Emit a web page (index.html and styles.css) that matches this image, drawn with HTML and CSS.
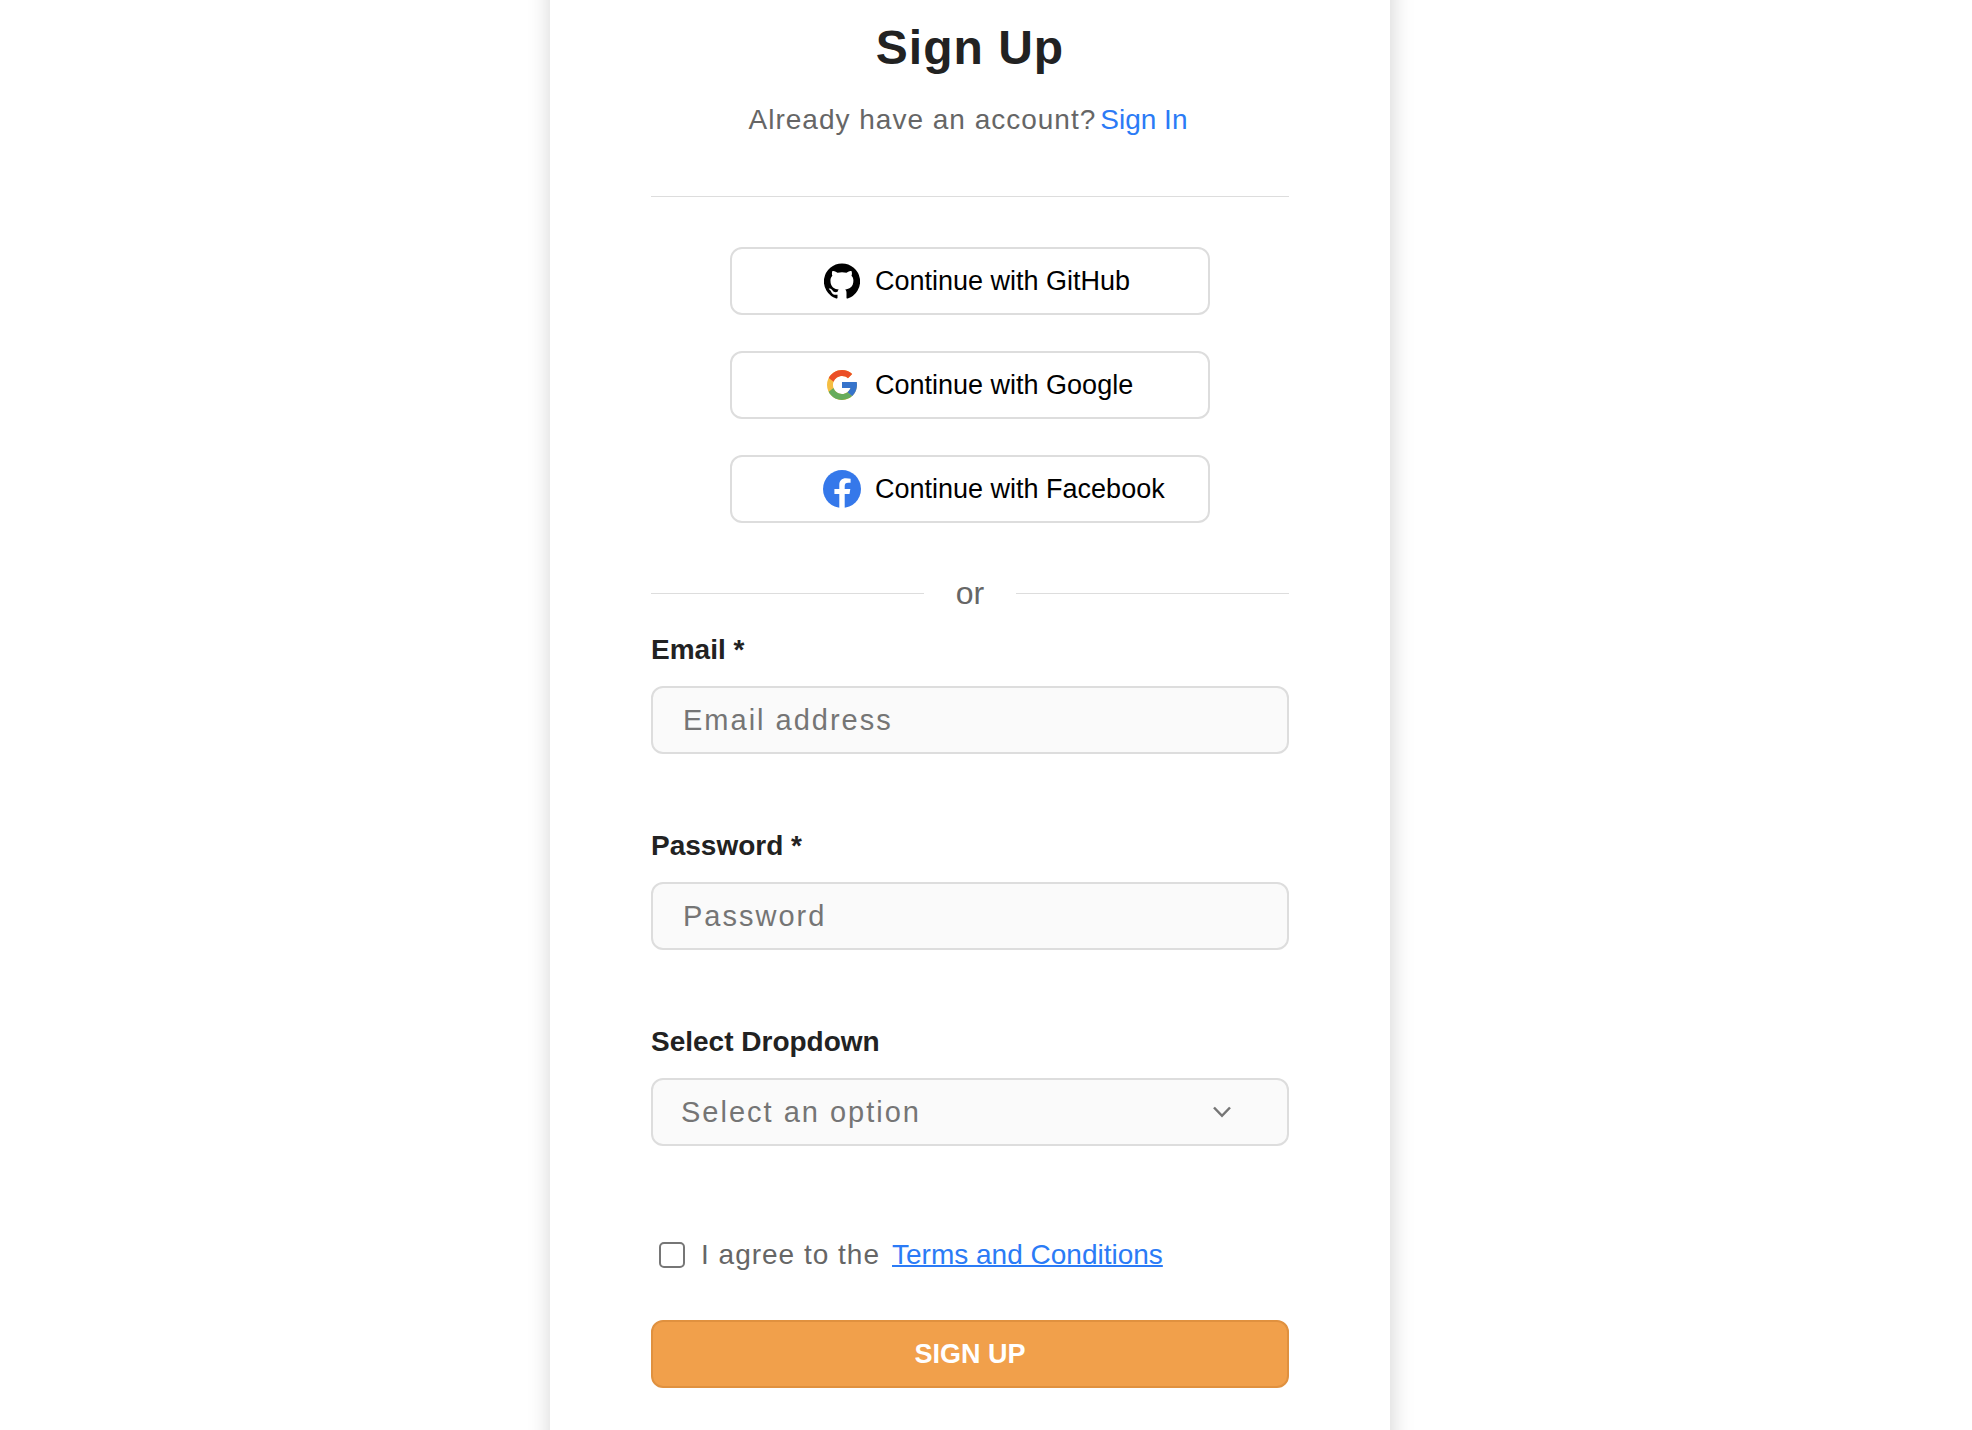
FILE: index.html
```html
<!DOCTYPE html>
<html lang="en">
<head>
<meta charset="utf-8">
<meta name="viewport" content="width=device-width, initial-scale=1">
<title>Sign Up</title>
<link rel="stylesheet" href="styles.css">
</head>
<body>
<main class="page">
  <section class="card">
    <header class="intro">
      <h1 class="title">Sign Up</h1>
      <p class="subtitle">Already have an account?<a class="signin" href="#">Sign In</a></p>
    </header>

    <div class="socials">
      <button class="social" type="button">
        <span class="social-icon"><svg width="36" height="36" viewBox="0 0 24 24" aria-hidden="true"><path d="M12 .3a12 12 0 0 0-3.8 23.4c.6.1.8-.3.8-.6v-2c-3.3.7-4-1.6-4-1.6-.6-1.4-1.4-1.8-1.4-1.8-1-.7.1-.7.1-.7 1.2 0 1.9 1.2 1.9 1.2 1 1.8 2.8 1.3 3.5 1 0-.8.4-1.3.7-1.6-2.7-.3-5.5-1.3-5.5-6 0-1.2.5-2.3 1.3-3.1-.2-.4-.6-1.6 0-3.2 0 0 1-.3 3.4 1.2a11.5 11.5 0 0 1 6 0c2.3-1.5 3.3-1.2 3.3-1.2.6 1.6.2 2.8 0 3.2.9.8 1.3 1.9 1.3 3.2 0 4.6-2.8 5.6-5.5 5.9.5.4.9 1 .9 2.2v3.3c0 .3.1.7.8.6A12 12 0 0 0 12 .3"/></svg></span>
        Continue with GitHub
      </button>
      <button class="social" type="button">
        <span class="social-icon"><svg width="36" height="36" viewBox="0 0 48 48" aria-hidden="true"><path fill="#f5be42" d="M43.611,20.083H42V20H24v8h11.303c-1.649,4.657-6.08,8-11.303,8c-6.627,0-12-5.373-12-12c0-6.627,5.373-12,12-12c3.059,0,5.842,1.154,7.961,3.039l5.657-5.657C34.046,6.053,29.268,4,24,4C12.955,4,4,12.955,4,24c0,11.045,8.955,20,20,20c11.045,0,20-8.955,20-20C44,22.659,43.862,21.35,43.611,20.083z"/><path fill="#eb4f27" d="M6.306,14.691l6.571,4.819C14.655,15.108,18.961,12,24,12c3.059,0,5.842,1.154,7.961,3.039l5.657-5.657C34.046,6.053,29.268,4,24,4C16.318,4,9.656,8.337,6.306,14.691z"/><path fill="#67ac5b" d="M24,44c5.166,0,9.86-1.977,13.409-5.192l-6.19-5.238C29.211,35.091,26.715,36,24,36c-5.202,0-9.619-3.317-11.283-7.946l-6.522,5.025C9.505,39.556,16.227,44,24,44z"/><path fill="#3674cb" d="M43.611,20.083H42V20H24v8h11.303c-0.792,2.237-2.231,4.166-4.087,5.571l6.193,5.236C36.971,39.205,44,34,44,24C44,22.659,43.862,21.35,43.611,20.083z"/></svg></span>
        Continue with Google
      </button>
      <button class="social" type="button">
        <span class="social-icon"><svg width="38" height="38" viewBox="0 0 38 38" aria-hidden="true"><circle cx="19" cy="19" r="19" fill="#3578ea"/><path fill="#fff" d="M16.300 38V24.100H11.400V19.100H16.300V15C16.300 10.600 18.800 8.300 22.900 8.300C24.700 8.300 26.200 8.500 27.600 8.700V12.700H25.200C22.700 12.700 21.700 13.900 21.700 16V19.100H27.300L26.500 24.100H21.700V38Z"/></svg></span>
        Continue with Facebook
      </button>
    </div>

    <div class="divider">or</div>

    <form class="form">
      <div class="field">
        <label class="label" for="email">Email *</label>
        <input class="control" id="email" type="email" placeholder="Email address">
      </div>
      <div class="field">
        <label class="label" for="password">Password *</label>
        <input class="control" id="password" type="password" placeholder="Password">
      </div>
      <div class="field">
        <label class="label" for="option">Select Dropdown</label>
        <div class="select-wrap">
          <select class="control select" id="option">
            <option>Select an option</option>
          </select>
          <svg class="chevron" width="20" height="12" viewBox="0 0 20 12" aria-hidden="true"><path d="M2 1.500L10 9.800L18 1.500" fill="none" stroke="#757575" stroke-width="2.500"/></svg>
        </div>
      </div>
      <div class="agree">
        <input class="checkbox" id="agree" type="checkbox">
        <label for="agree">I agree to the</label>
        <a class="terms" href="#">Terms and Conditions</a>
      </div>
      <button class="submit" type="submit">SIGN UP</button>
    </form>
  </section>
</main>
</body>
</html>
```
FILE: styles.css
```css
* {
  box-sizing: border-box;
}

body {
  margin: 0;
  background: #fff;
  color: #222;
  font-family: "Liberation Sans", Arial, Helvetica, sans-serif;
  font-size: 28px;
  line-height: 32px;
}

a {
  color: #2b7bf6;
  letter-spacing: 0;
}

.page {
  display: flex;
  justify-content: center;
  min-height: 100vh;
  padding-right: 32px;
  overflow: hidden;
}

/* The card runs past both ends of the page, so only its sides cast a shadow. */
.card {
  flex: 0 1 840px;
  margin: -40px 0;
  padding: 60px 101px 82px;
  background: #fff;
  box-shadow: 1px 0 22px rgba(0, 0, 0, 0.18);
}

.intro {
  padding-bottom: 60px;
  border-bottom: 1px solid #ddd;
  text-align: center;
}

.title {
  margin: 0 0 28px;
  font-size: 48px;
  line-height: 56px;
  letter-spacing: 1px;
}

.subtitle {
  margin: 0;
  color: #666;
  letter-spacing: 1px;
}

.signin {
  margin: 0 4px;
  text-decoration: none;
}

.socials {
  display: flex;
  flex-direction: column;
  align-items: center;
  gap: 36px;
  padding: 50px 0 54px;
}

.social {
  display: flex;
  align-items: center;
  gap: 14px;
  width: 100%;
  max-width: 480px;
  height: 68px;
  padding: 0 0 0 91px;
  border: 2px solid #ddd;
  border-radius: 12px;
  background: #fff;
  color: #000;
  font: inherit;
  font-size: 27px;
}

.social-icon {
  display: flex;
  justify-content: center;
  width: 38px;
}

.divider {
  display: flex;
  align-items: center;
  gap: 32px;
  color: #666;
  font-size: 32px;
}

.divider::before,
.divider::after {
  content: "";
  flex: 1;
  height: 1px;
  background: #ddd;
}

.form {
  display: flex;
  flex-direction: column;
  padding-top: 25px;
}

.field {
  display: flex;
  flex-direction: column;
  gap: 20px;
  margin-bottom: 76px;
}

.label {
  font-weight: bold;
}

.control {
  width: 100%;
  height: 68px;
  padding: 0 30px;
  border: 2px solid #ddd;
  border-radius: 12px;
  background: #fafafa;
  color: #757575;
  font: inherit;
  font-size: 29px;
  letter-spacing: 2px;
  appearance: none;
}

.control::placeholder {
  color: #757575;
}

.select-wrap {
  position: relative;
}

.select {
  padding: 0 28px;
}

.chevron {
  position: absolute;
  top: 28px;
  right: 57px;
  pointer-events: none;
}

.agree {
  display: flex;
  align-items: center;
  margin: 17px 0 49px 8px;
  color: #666;
  letter-spacing: 1px;
}

.checkbox {
  width: 26px;
  height: 26px;
  margin: 0 16px 0 0;
  border: 2px solid #767676;
  border-radius: 5px;
  background: #fff;
  appearance: none;
}

.checkbox:checked {
  background: #2b7bf6;
}

.terms {
  margin-left: 12px;
  text-decoration-thickness: 2px;
}

.submit {
  height: 68px;
  border: 2px solid #e0913f;
  border-radius: 12px;
  background: #f1a04b;
  color: #fff;
  font: inherit;
  font-size: 27px;
  font-weight: bold;
}
```
